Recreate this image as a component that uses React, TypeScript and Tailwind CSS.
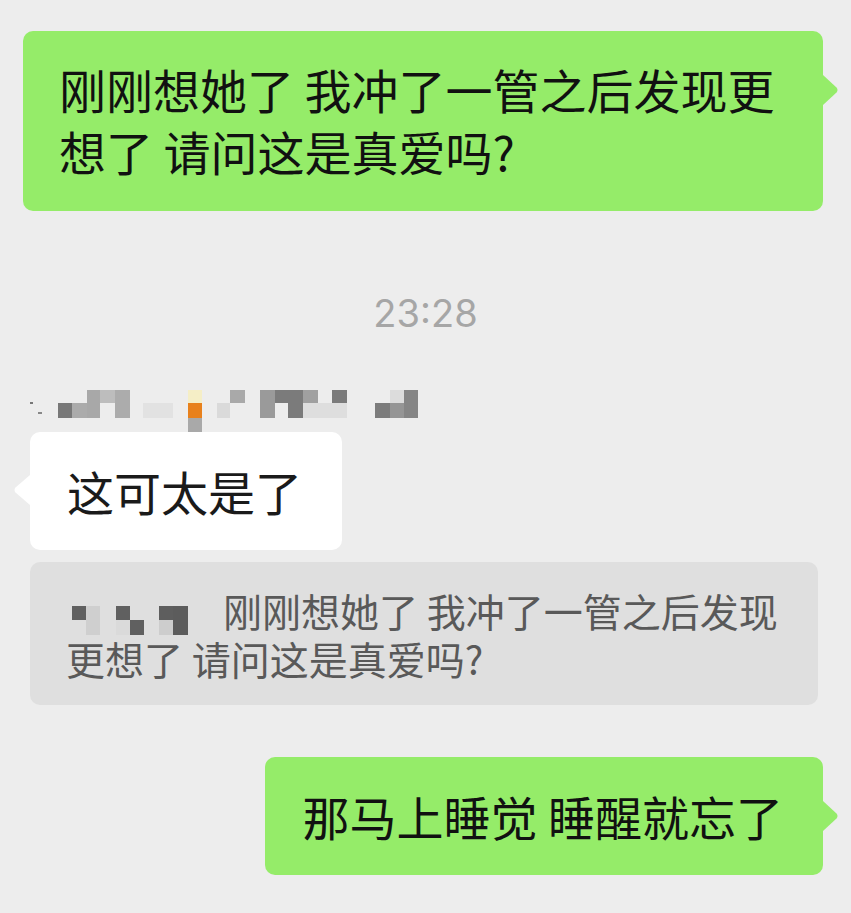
import React from 'react';

const cjk = "font-['Noto_Sans_CJK_SC',sans-serif]";

// tail pointing right, for sent bubbles
const RightTail = ({ color }: { color: string }) => (
  <svg className="absolute left-full top-[44px]" width="16" height="30" viewBox="0 0 16 30">
    <path d="M0 0 L13.5 12.5 Q15.5 15 13.5 17.5 L0 30 Z" fill={color} />
  </svg>
);

const LeftTail = () => (
  <svg className="absolute right-full top-[43px]" width="17" height="30" viewBox="0 0 17 30">
    <path d="M17 0 L2.5 12.5 Q0.5 15 2.5 17.5 L17 30 Z" fill="#ffffff" />
  </svg>
);

// blurred nickname above the received message
const NameMosaic = () => {
  const r1 = 2, r2 = 15, r3 = 30;
  const blocks: [number, number, number, number, string][] = [
    [30, 14, 3, 2, '#777'],
    [38, 24, 4, 2, '#888'],
    [58, r2, 14, 15, '#787878'],
    [72, r2, 15, 15, '#ababab'],
    [87, r1, 13, 28, '#a8a8a8'],
    [100, r1, 15, 13, '#bdbdbd'],
    [115, r1, 15, 28, '#acacac'],
    [143, r2, 30, 15, '#e2e2e2'],
    [188, r1, 14, 13, '#f5eec6'],
    [188, r2, 14, 15, '#e8811c'],
    [188, r3, 14, 14, '#a9a9a9'],
    [217, r2, 13, 15, '#dadada'],
    [230, r1, 15, 13, '#a9a9a9'],
    [260, r1, 15, 28, '#9a9a9a'],
    [275, r1, 28, 13, '#7b7b7b'],
    [288, r2, 15, 15, '#7b7b7b'],
    [303, r1, 15, 13, '#a0a0a0'],
    [303, r2, 44, 15, '#dedede'],
    [332, r1, 15, 13, '#7b7b7b'],
    [375, r2, 15, 15, '#7c7c7c'],
    [390, r1, 14, 13, '#dcdcdc'],
    [390, r2, 14, 15, '#959595'],
    [404, r1, 14, 28, '#858585'],
  ];
  return (
    <svg width="420" height="44" viewBox="0 0 420 44" className="block">
      {blocks.map(([x, y, w, h, c], i) => (
        <rect key={i} x={x} y={y} width={w} height={h} fill={c} />
      ))}
    </svg>
  );
};

const QuoteMosaic = () => (
  <svg width="157" height="48" viewBox="0 0 157 48" className="block shrink-0 overflow-visible">
    <rect x="6" y="19" width="14" height="14" fill="#606060" />
    <rect x="20" y="19" width="14" height="29" fill="#cfcfcf" />
    <rect x="50" y="19" width="14" height="14" fill="#606060" />
    <rect x="50" y="33" width="14" height="15" fill="#dadada" />
    <rect x="64" y="33" width="14" height="15" fill="#606060" />
    <rect x="93" y="19" width="14" height="14" fill="#5e5e5e" />
    <rect x="93" y="33" width="14" height="15" fill="#cdcdcd" />
    <rect x="107" y="19" width="15" height="29" fill="#5c5c5c" />
  </svg>
);

const App = () => {
  return (
    <div className={`w-full min-h-[913px] bg-[#ededed] flex flex-col pt-[31px] ${cjk}`}>
      <div className="flex justify-end pr-[28px]">
        <div className="relative w-[800px] bg-[#95ec69] rounded-[10px] pl-[36px] pr-[30px] pt-[27px] pb-[29px] text-[47px] leading-[62px] text-[#111111] whitespace-nowrap">
          刚刚想她了 我冲了一管之后发现更
          <br />
          想了 请问这是真爱吗?
          <RightTail color="#95ec69" />
        </div>
      </div>

      <div className="mt-[82px] text-center text-[38px] leading-[40px] text-[#a6a6a6] font-['Inter',sans-serif]">
        23:28
      </div>

      <div className="mt-[55px]">
        <NameMosaic />
      </div>

      <div className="flex pl-[30px]">
        <div className="relative bg-white rounded-[10px] pl-[37px] pr-[40px] py-[29px] text-[47px] leading-[60px] text-[#1a1a1a] whitespace-nowrap">
          这可太是了
          <LeftTail />
        </div>
      </div>

      <div className="mt-[12px] ml-[30px] w-[788px] bg-[#dfdfdf] rounded-[10px] pl-[36px] pr-[20px] pt-[25px] pb-[23px] text-[39px] leading-[47px] text-[#595959]">
        <div className="flex items-start">
          <QuoteMosaic />
          <span className="whitespace-nowrap">刚刚想她了 我冲了一管之后发现</span>
        </div>
        <div className="whitespace-nowrap">更想了 请问这是真爱吗?</div>
      </div>

      <div className="mt-[52px] flex justify-end pr-[28px]">
        <div className="relative bg-[#95ec69] rounded-[10px] pl-[37px] pr-[40px] py-[29px] text-[47px] leading-[60px] text-[#111111] whitespace-nowrap">
          那马上睡觉 睡醒就忘了
          <RightTail color="#95ec69" />
        </div>
      </div>
    </div>
  );
};

export default App;
